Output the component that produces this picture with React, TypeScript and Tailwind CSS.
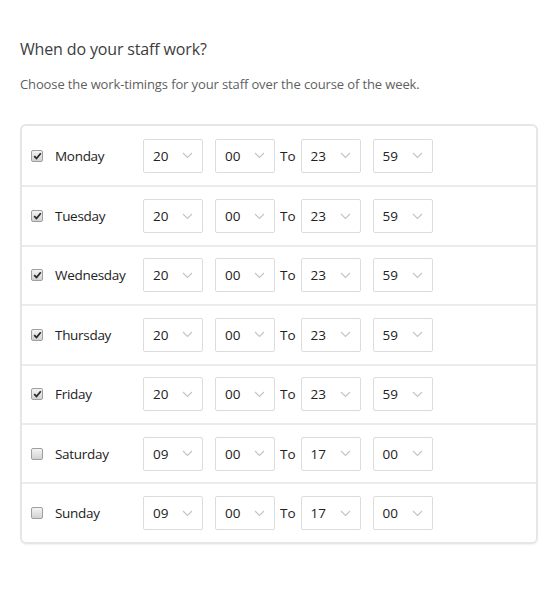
import React from 'react';

type Day = { name: string; on: boolean; from: [string, string]; to: [string, string] };

const days: Day[] = [
  { name: 'Monday', on: true, from: ['20', '00'], to: ['23', '59'] },
  { name: 'Tuesday', on: true, from: ['20', '00'], to: ['23', '59'] },
  { name: 'Wednesday', on: true, from: ['20', '00'], to: ['23', '59'] },
  { name: 'Thursday', on: true, from: ['20', '00'], to: ['23', '59'] },
  { name: 'Friday', on: true, from: ['20', '00'], to: ['23', '59'] },
  { name: 'Saturday', on: false, from: ['09', '00'], to: ['17', '00'] },
  { name: 'Sunday', on: false, from: ['09', '00'], to: ['17', '00'] },
];

function Check({ on }: { on: boolean }) {
  return (
    <span className="flex h-[12px] w-[12px] items-center justify-center rounded-[2px] border border-[#9f9f9f] bg-gradient-to-b from-[#f4f4f4] to-[#d2d2d2]">
      {on && (
        <svg width="9" height="8" viewBox="0 0 9 8">
          <path d="M1.2 4.2 L3.5 6.5 L7.8 1.2" fill="none" stroke="#2b2b2b" strokeWidth="1.8" />
        </svg>
      )}
    </span>
  );
}

function Select({ value }: { value: string }) {
  return (
    <div className="flex h-[34px] w-[60px] items-center justify-between rounded-[2px] border border-[#dcdcdc] bg-white pl-[9px] pr-[9px] text-[13.5px] text-[#222]">
      <span>{value}</span>
      <svg width="11" height="7" viewBox="0 0 11 7">
        <path d="M1 1 L5.5 5.5 L10 1" fill="none" stroke="#c4c4c4" strokeWidth="1.1" />
      </svg>
    </div>
  );
}

export default function App() {
  return (
    <div className="min-h-screen bg-white px-[20px] pt-[37px] font-['Open_Sans',sans-serif] text-[#333]">
      <h2 className="text-[16px] leading-[24px] tracking-[-0.15px] text-[#3d3d3d]">When do your staff work?</h2>
      <p className="mt-[13px] text-[13px] leading-[20px] tracking-[-0.12px] text-[#5f5f5f]">
        Choose the work-timings for your staff over the course of the week.
      </p>
      <div className="mt-[30px] w-[518px] rounded-[6px] border-2 border-[#e6e6e6] shadow-[0_1px_2px_rgba(0,0,0,0.06)]">
        {days.map((d, i) => (
          <div
            key={d.name}
            className={`flex h-[59.4px] items-center pl-[9px] ${i > 0 ? 'border-t-2 border-[#ebebeb]' : ''}`}
          >
            <Check on={d.on} />
            <span className="ml-[12px] w-[88px] text-[13.5px] tracking-[-0.3px] text-[#222]">{d.name}</span>
            <div className="flex items-center">
              <Select value={d.from[0]} />
              <div className="ml-[12px]"><Select value={d.from[1]} /></div>
              <span className="mx-[5px] text-[13.5px] text-[#222]">To</span>
              <Select value={d.to[0]} />
              <div className="ml-[12px]"><Select value={d.to[1]} /></div>
            </div>
          </div>
        ))}
      </div>
    </div>
  );
}
